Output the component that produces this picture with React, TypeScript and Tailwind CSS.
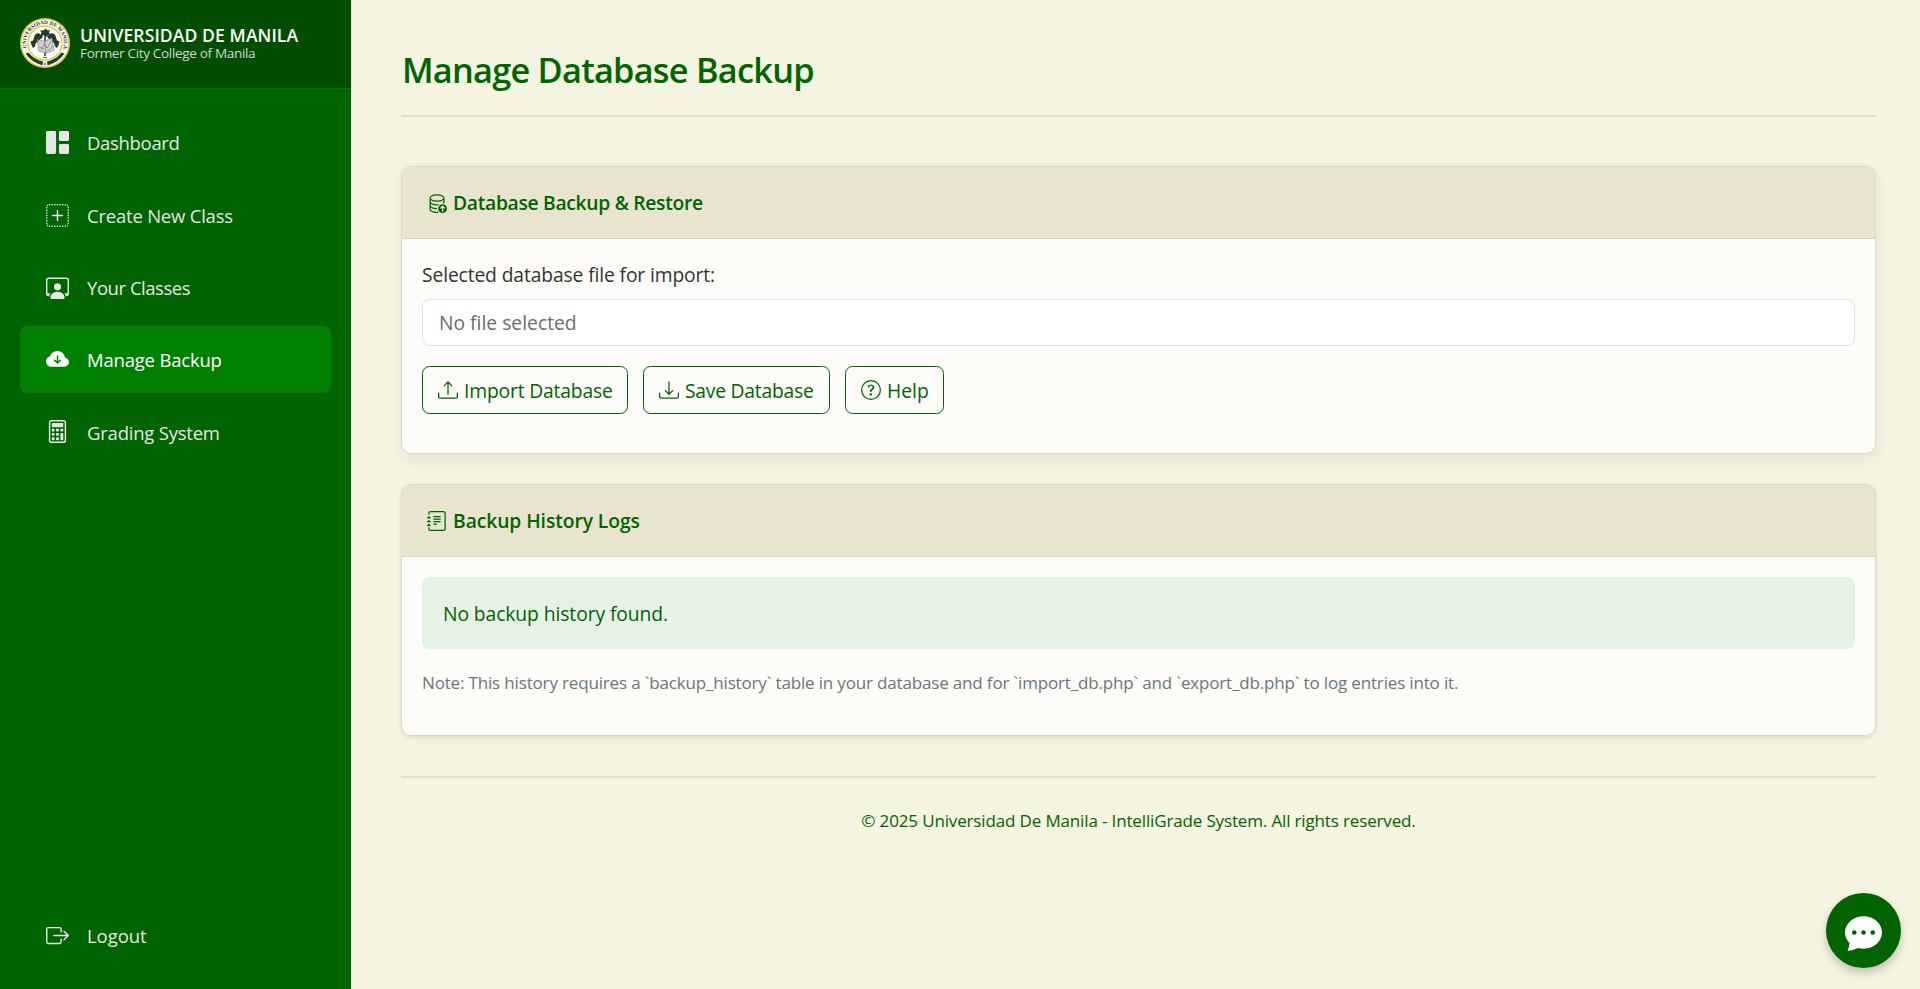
import type { ReactNode } from 'react';
import type { IconType } from 'react-icons';
import {
  BsBoxArrowRight,
  BsCalculator,
  BsChatDotsFill,
  BsCloudArrowDownFill,
  BsDatabaseUp,
  BsDownload,
  BsGrid1X2Fill,
  BsJournalText,
  BsPersonWorkspace,
  BsPlusSquareDotted,
  BsQuestionCircle,
  BsUpload,
} from 'react-icons/bs';

type NavEntry = { label: string; icon: IconType; tracking: string; active?: boolean };

const navEntries: NavEntry[] = [
  { label: 'Dashboard', icon: BsGrid1X2Fill, tracking: 'tracking-[-0.32px]' },
  { label: 'Create New Class', icon: BsPlusSquareDotted, tracking: 'tracking-[-0.22px]' },
  { label: 'Your Classes', icon: BsPersonWorkspace, tracking: 'tracking-[-0.46px]' },
  { label: 'Manage Backup', icon: BsCloudArrowDownFill, tracking: 'tracking-[-0.2px]', active: true },
  { label: 'Grading System', icon: BsCalculator, tracking: 'tracking-[-0.22px]' },
];

function Seal() {
  return (
    <svg viewBox="0 0 100 100" className="size-[50px] shrink-0" aria-hidden="true">
      <defs>
        <path id="seal-arc" d="M14.500 63 A37.800 37.800 0 1 1 85.500 63" />
      </defs>
      <circle cx="50" cy="50" r="50" fill="#e3c53c" />
      <circle cx="50" cy="50" r="47" fill="#fbfbf6" />
      <circle cx="50" cy="50" r="34" fill="#fdfdfb" stroke="#e6c63a" strokeWidth="2.6" />
      <text fontFamily="Liberation Serif, serif" fontWeight="700" fontSize="10.5" fill="#26302a">
        <textPath href="#seal-arc" textLength="140" startOffset="3">
          UNIVERSIDAD DE MANILA
        </textPath>
      </text>
      <path d="M11 71 Q22 88 45 95 L46 87 Q28 83 17 69 Z" fill="#24402f" />
      <path d="M89 71 Q78 88 55 95 L54 87 Q72 83 83 69 Z" fill="#24402f" />
      <circle cx="50" cy="92" r="2.4" fill="#7d8578" />
      <g fill="#25392d">
        <path d="M48 24 l4 -3 3 4 5 -1 -2 5 3 4 -6 1 -3 4 -4 -4 -7 0 2 -5 -3 -4 5 0z" />
        <path d="M30 33 l7 -3 5 4 5 1 -4 6 -3 2 -3 6 -5 0 -2 8 -4 3 -3 -6 -2 -7 5 -2 2 -6z" />
        <path d="M70 33 l-7 -3 -5 4 -5 1 4 6 3 2 3 6 5 0 2 8 4 3 3 -6 2 -7 -5 -2 -2 -6z" />
        <path d="M48.500 34h3v42h-3z" />
      </g>
      <path d="M35 43 L49 47 L64 40 L68 65 L52 70 L37 66 Z" fill="#cfcfcd" stroke="#75777a" strokeWidth="1.2" />
      <path d="M49 47 L52 70 M42 63 L49 52 L54 60 L62 47 M55 67 L66 56 M39 58 L47 62" fill="none" stroke="#6d6f72" strokeWidth="1.3" />
      <path d="M46 79h8" stroke="#606660" strokeWidth="2" />
    </svg>
  );
}

function NavItem({ label, icon: Icon, tracking, active }: NavEntry) {
  return (
    <a
      href="#"
      className={`flex h-[67.5px] items-center rounded-[7.5px] pl-[26px] text-[18.5px] ${
        active ? 'bg-[#008000] text-white' : 'text-[#e6e6e6]'
      }`}
    >
      <Icon className="mr-[18px] size-[23px] shrink-0" />
      <span className={`whitespace-nowrap pt-px ${tracking}`}>{label}</span>
    </a>
  );
}

function Card({ icon: Icon, title, shadow, children }: { icon: IconType; title: ReactNode; shadow: string; children: ReactNode }) {
  return (
    <section className={`rounded-[10px] border border-[#e0d9c3] bg-[#fdfcf8] ${shadow}`}>
      <h2 className="flex h-[72px] items-center rounded-t-[9px] border-b border-[#dcd5ba] bg-[#e9e4d0] pl-[25px] text-[19.3px] font-semibold text-[#006400]">
        <Icon className="mr-[6px] size-5" />
        {title}
      </h2>
      {children}
    </section>
  );
}

function OutlineButton({ icon: Icon, width, children }: { icon: IconType; width: string; children: ReactNode }) {
  return (
    <button
      type="button"
      className={`flex h-[48px] items-center whitespace-nowrap rounded-[7.5px] border border-[#006400] pl-[15px] text-[#006400] ${width}`}
    >
      <Icon className="mr-[6px] size-5 shrink-0" />
      {children}
    </button>
  );
}

export default function App() {
  return (
    <div className="flex h-[989px] overflow-hidden bg-[#f5f3e1] font-['Open_Sans','Noto_Sans',sans-serif] text-[19.3px]">
      <aside className="flex w-[352px] shrink-0 flex-col border-r border-[#e7e2cc] bg-[#006400]">
        <div className="flex h-[89px] items-start border-b border-[#007300] bg-[#004d00] pl-5 pt-[18px]">
          <Seal />
          <div className="ml-[10px] whitespace-nowrap pt-[6px] leading-none">
            <div className="text-[17.6px] font-semibold leading-[22px] tracking-[0.07px] text-white">UNIVERSIDAD DE MANILA</div>
            <div className="text-[13.5px] leading-[14px] tracking-[-0.32px] text-[#ccdbcc]">Former City College of Manila</div>
          </div>
        </div>
        <nav className="flex flex-1 flex-col gap-[4.8px] px-5 pt-5">
          {navEntries.map((entry) => (
            <NavItem key={entry.label} {...entry} />
          ))}
        </nav>
        <div className="mx-5 mb-5 border-t border-[#026502] pt-5">
          <NavItem label="Logout" icon={BsBoxArrowRight} tracking="tracking-[-0.06px]" />
        </div>
      </aside>

      <main className="flex-1 pl-[49px] pr-[44px] pt-[49px]">
        <header className="h-[68px] border-b-2 border-[#e4dec8]">
          <h1 className="pl-px text-[34.3px] font-semibold leading-[42px] tracking-[-0.75px] text-[#006400]">
            Manage Database Backup
          </h1>
        </header>

        <div className="mt-[49px] flex flex-col gap-[30px]">
          <Card
            icon={BsDatabaseUp}
            title={<span className="pt-[2px] tracking-[-0.31px]">Database Backup &amp; Restore</span>}
            shadow="shadow-[0_5px_15px_rgba(0,0,0,0.07)]"
          >
            <div className="h-[214px] px-5 pt-[21px]">
              <label className="block h-[39px] leading-[30px] tracking-[-0.13px] text-[#333333]">
                Selected database file for import:
              </label>
              <div className="flex h-[47px] items-center rounded-[7.5px] border border-[#dee2e6] bg-white pl-[16px] pt-[2px] text-[#6c6c6c]">
                No file selected
              </div>
              <div className="mt-5 flex gap-[15px]">
                <OutlineButton icon={BsUpload} width="w-[206px]">
                  <span className="pt-[2px] tracking-[-0.17px]">Import Database</span>
                </OutlineButton>
                <OutlineButton icon={BsDownload} width="w-[187px]">
                  <span className="pt-[2px] tracking-[-0.23px]">Save Database</span>
                </OutlineButton>
                <OutlineButton icon={BsQuestionCircle} width="w-[99px]">
                  <span className="pt-[2px]">Help</span>
                </OutlineButton>
              </div>
            </div>
          </Card>

          <Card
            icon={BsJournalText}
            title={<span className="pt-[2px] tracking-[-0.08px]">Backup History Logs</span>}
            shadow="shadow-[0_2px_5px_rgba(0,0,0,0.09)]"
          >
            <div className="h-[178px] px-5 pt-5">
              <div className="flex h-[72px] items-center rounded-[7.5px] border border-[#d5fbd5] bg-[#e7f2e6] pl-[20px] pt-[2px] tracking-[-0.09px] text-[#006400]">
                No backup history found.
              </div>
              <p className="mt-[20px] whitespace-nowrap text-[17px] leading-[27px] tracking-[-0.164px] text-[#6c757d]">
                Note: This history requires a `backup_history` table in your database and for `import_db.php` and `export_db.php` to
                log entries into it.
              </p>
            </div>
          </Card>
        </div>

        <footer className="mt-10 border-t-2 border-[#e4dec8] pt-[29px] text-center text-[17px] leading-[27px] tracking-[-0.148px] text-[#006400]">
          © 2025 Universidad De Manila - IntelliGrade System. All rights reserved.
        </footer>
      </main>

      <button
        type="button"
        aria-label="Open chat"
        className="absolute left-[1826px] top-[893px] flex size-[75px] items-center justify-center rounded-full bg-[#006400] pt-[3px] text-white shadow-[0_5px_10px_rgba(0,0,0,0.2)]"
      >
        <BsChatDotsFill className="size-[37px]" />
      </button>
    </div>
  );
}
